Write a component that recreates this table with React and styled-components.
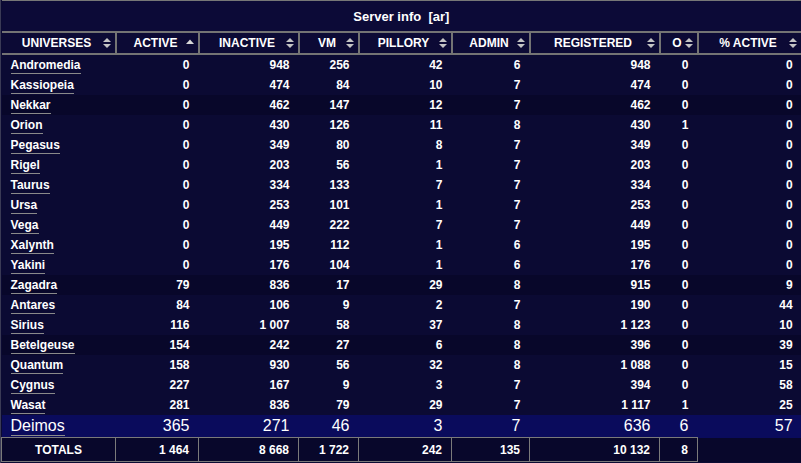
import React from "react";
import styled, { createGlobalStyle } from "styled-components";

const GlobalStyle = createGlobalStyle`
  html, body {
    margin: 0;
    padding: 0;
    background: #0b0a33;
  }
  body {
    font-family: "Liberation Sans", Arial, sans-serif;
    color: #fff;
  }
`;

const Wrapper = styled.div`
  width: 801px;
  height: 463px;
  background: #0b0a33;
  box-sizing: border-box;
  border-left: 1px solid #3a3a55;
  overflow: hidden;
`;

const Table = styled.table`
  width: 800px;
  table-layout: fixed;
  border-collapse: collapse;
  font-size: 12px;
  font-weight: bold;
`;

const Title = styled.th`
  height: 30px;
  padding: 0;
  text-align: center;
  font-size: 13px;
  font-weight: bold;
  background: #0c0a37;
  border-top: 1px solid #777;
  border-right: 1px solid #777;
  border-top-left-radius: 6px;
  border-top-right-radius: 6px;
  white-space: pre;
`;

const HeadCell = styled.th`
  height: 20px;
  padding: 0;
  border: 2px solid #747474;
  border-left: ${(p) => (p.$first ? "0" : "2px solid #747474")};
  text-transform: uppercase;
  font-weight: bold;
  background: #0c0a35;
`;

const HeadInner = styled.div`
  display: flex;
  align-items: center;
  padding: 0 3px 0 10px;
`;

const HeadLabel = styled.span`
  flex: 1;
  text-align: center;
  white-space: nowrap;
`;

const SortIcon = styled.svg`
  width: 10px;
  height: 12px;
  flex: none;
`;

const Row = styled.tr`
  background: ${(p) => (p.$dark ? "#08072a" : "transparent")};
`;

const Cell = styled.td`
  height: 20px;
  padding: 0 9px;
  text-align: ${(p) => (p.$left ? "left" : "right")};
  white-space: nowrap;
  line-height: 20px;
`;

const NameLink = styled.a`
  color: #fff;
  text-decoration: none;
  border-bottom: 1px solid #8a8a8a;
  padding-bottom: 1px;
`;

const HighlightRow = styled.tr`
  background: #0a0b5c;
`;

const BigCell = styled.td`
  height: 22px;
  padding: 0 9px;
  font-size: 16px;
  font-weight: normal;
  line-height: 22px;
  text-align: ${(p) => (p.$left ? "left" : "right")};
  white-space: nowrap;
`;

const TotalRow = styled.tr`
  background: #08072b;
`;

const TotalCell = styled.td`
  height: 23px;
  padding: 0 9px;
  border: ${(p) => (p.$empty ? "0" : "1px solid #7a7a7a")};
  text-align: ${(p) => (p.$center ? "center" : "right")};
  white-space: nowrap;
`;

const columns = [
  { label: "Universes", width: 114 },
  { label: "Active", width: 83, sort: "asc" },
  { label: "Inactive", width: 100 },
  { label: "VM", width: 60 },
  { label: "Pillory", width: 93 },
  { label: "Admin", width: 78 },
  { label: "Registered", width: 130 },
  { label: "O", width: 38 },
  { label: "% Active", width: 104 },
];

const rows = [
  ["Andromedia", "0", "948", "256", "42", "6", "948", "0", "0"],
  ["Kassiopeia", "0", "474", "84", "10", "7", "474", "0", "0"],
  ["Nekkar", "0", "462", "147", "12", "7", "462", "0", "0"],
  ["Orion", "0", "430", "126", "11", "8", "430", "1", "0"],
  ["Pegasus", "0", "349", "80", "8", "7", "349", "0", "0"],
  ["Rigel", "0", "203", "56", "1", "7", "203", "0", "0"],
  ["Taurus", "0", "334", "133", "7", "7", "334", "0", "0"],
  ["Ursa", "0", "253", "101", "1", "7", "253", "0", "0"],
  ["Vega", "0", "449", "222", "7", "7", "449", "0", "0"],
  ["Xalynth", "0", "195", "112", "1", "6", "195", "0", "0"],
  ["Yakini", "0", "176", "104", "1", "6", "176", "0", "0"],
  ["Zagadra", "79", "836", "17", "29", "8", "915", "0", "9"],
  ["Antares", "84", "106", "9", "2", "7", "190", "0", "44"],
  ["Sirius", "116", "1 007", "58", "37", "8", "1 123", "0", "10"],
  ["Betelgeuse", "154", "242", "27", "6", "8", "396", "0", "39"],
  ["Quantum", "158", "930", "56", "32", "8", "1 088", "0", "15"],
  ["Cygnus", "227", "167", "9", "3", "7", "394", "0", "58"],
  ["Wasat", "281", "836", "79", "29", "7", "1 117", "1", "25"],
];

const current = ["Deimos", "365", "271", "46", "3", "7", "636", "6", "57"];
const totals = ["1 464", "8 668", "1 722", "242", "135", "10 132", "8"];

// a few rows sit on darker bands of the page background
const darkRows = [2, 11, 14];

function Sort({ dir }) {
  if (dir === "asc") {
    return (
      <SortIcon viewBox="0 0 10 12">
        <path d="M1 7 L5 2.5 L9 7 Z" fill="#d8d8d8" />
      </SortIcon>
    );
  }
  return (
    <SortIcon viewBox="0 0 10 12">
      <path d="M1 5 L5 1 L9 5 Z" fill="#c4c4c4" />
      <path d="M1 7 L5 11 L9 7 Z" fill="#c4c4c4" />
    </SortIcon>
  );
}

export default function App() {
  return (
    <>
      <GlobalStyle />
      <Wrapper>
        <Table>
          <colgroup>
            {columns.map((c) => (
              <col key={c.label} style={{ width: c.width }} />
            ))}
          </colgroup>
          <thead>
            <tr>
              <Title colSpan={columns.length}>Server info  [ar]</Title>
            </tr>
            <tr>
              {columns.map((c, i) => (
                <HeadCell key={c.label} $first={i === 0}>
                  <HeadInner>
                    <HeadLabel>{c.label}</HeadLabel>
                    <Sort dir={c.sort} />
                  </HeadInner>
                </HeadCell>
              ))}
            </tr>
          </thead>
          <tbody>
            {rows.map((r, i) => (
              <Row key={r[0]} $dark={darkRows.includes(i)}>
                {r.map((v, j) =>
                  j === 0 ? (
                    <Cell key={j} $left>
                      <NameLink href="#">{v}</NameLink>
                    </Cell>
                  ) : (
                    <Cell key={j}>{v}</Cell>
                  )
                )}
              </Row>
            ))}
            <HighlightRow>
              {current.map((v, j) =>
                j === 0 ? (
                  <BigCell key={j} $left>
                    <NameLink href="#">{v}</NameLink>
                  </BigCell>
                ) : (
                  <BigCell key={j}>{v}</BigCell>
                )
              )}
            </HighlightRow>
            <TotalRow>
              <TotalCell $center>TOTALS</TotalCell>
              {totals.map((v, j) => (
                <TotalCell key={j}>{v}</TotalCell>
              ))}
              <TotalCell $empty />
            </TotalRow>
          </tbody>
        </Table>
      </Wrapper>
    </>
  );
}
